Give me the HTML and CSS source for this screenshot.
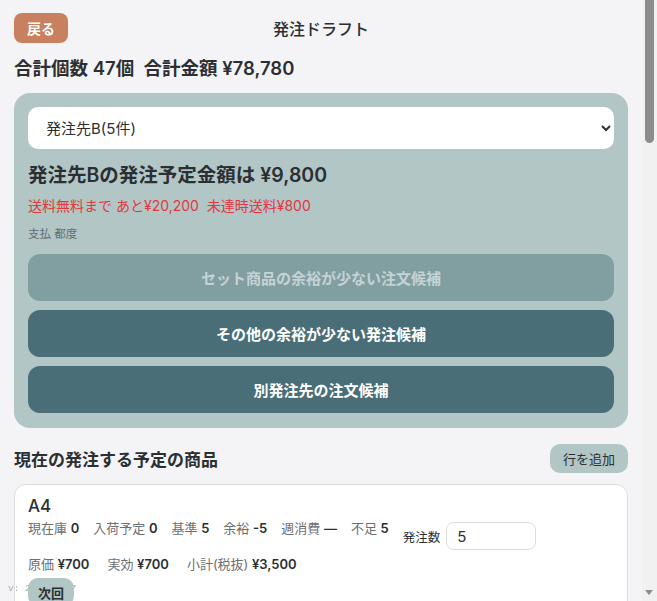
FILE: index.html
```html
<!DOCTYPE html>
<html lang="ja">
<head>
    <meta charset="UTF-8">
    <meta name="viewport" content="width=device-width, initial-scale=1.0">
    <title>発注ドラフト</title>
    <link rel="stylesheet" href="styles.css">
</head>
<body>

    <header class="topbar">
        <button class="back-btn">戻る</button>
        <h1 class="title">発注ドラフト</h1>
        <span></span>
    </header>

    <div class="totals">合計個数 47個&nbsp;&nbsp;合計金額 ¥78,780</div>

    <section class="supplier-panel">
        <select class="supplier-select">
            <option>発注先B(5件)</option>
            <option>発注先A(12件)</option>
            <option>発注先C(8件)</option>
        </select>

        <h2 class="supplier-total">発注先Bの発注予定金額は ¥9,800</h2>
        <p class="shipping">送料無料まで あと¥20,200&nbsp;&nbsp;未達時送料¥800</p>
        <p class="payment">支払 都度</p>

        <button class="candidate-btn" disabled>セット商品の余裕が少ない注文候補</button>
        <button class="candidate-btn">その他の余裕が少ない発注候補</button>
        <button class="candidate-btn">別発注先の注文候補</button>
    </section>

    <div class="list-head">
        <h2>現在の発注する予定の商品</h2>
        <button class="add-btn">行を追加</button>
    </div>

    <div class="item-list">
        <div class="item-card">
            <div class="item-name">A4</div>
            <div class="item-row">
                <div class="stats">
                    <span>現在庫 <b>0</b></span>
                    <span>入荷予定 <b>0</b></span>
                    <span>基準 <b>5</b></span>
                    <span>余裕 <b>-5</b></span>
                    <span>週消費 <b>—</b></span>
                    <span>不足 <b>5</b></span>
                </div>
                <label class="qty">発注数 <input type="text" value="5"></label>
            </div>
            <div class="prices">
                <span>原価 <b>¥700</b></span>
                <span>実効 <b>¥700</b></span>
                <span>小計(税抜) <b>¥3,500</b></span>
            </div>
            <button class="next-btn">次回</button>
        </div>

        <div class="item-card">
            <div class="item-name">B5</div>
            <div class="item-row">
                <div class="stats">
                    <span>現在庫 <b>2</b></span>
                    <span>入荷予定 <b>0</b></span>
                    <span>基準 <b>6</b></span>
                    <span>余裕 <b>-4</b></span>
                    <span>週消費 <b>—</b></span>
                    <span>不足 <b>4</b></span>
                </div>
                <label class="qty">発注数 <input type="text" value="4"></label>
            </div>
            <div class="prices">
                <span>原価 <b>¥650</b></span>
                <span>実効 <b>¥650</b></span>
                <span>小計(税抜) <b>¥2,600</b></span>
            </div>
            <button class="next-btn">次回</button>
        </div>

        <div class="item-card">
            <div class="item-name">A3</div>
            <div class="item-row">
                <div class="stats">
                    <span>現在庫 <b>1</b></span>
                    <span>入荷予定 <b>0</b></span>
                    <span>基準 <b>3</b></span>
                    <span>余裕 <b>-2</b></span>
                    <span>週消費 <b>—</b></span>
                    <span>不足 <b>2</b></span>
                </div>
                <label class="qty">発注数 <input type="text" value="2"></label>
            </div>
            <div class="prices">
                <span>原価 <b>¥850</b></span>
                <span>実効 <b>¥850</b></span>
                <span>小計(税抜) <b>¥1,700</b></span>
            </div>
            <button class="next-btn">次回</button>
        </div>

        <div class="item-card">
            <div class="item-name">封筒 長3</div>
            <div class="item-row">
                <div class="stats">
                    <span>現在庫 <b>0</b></span>
                    <span>入荷予定 <b>0</b></span>
                    <span>基準 <b>2</b></span>
                    <span>余裕 <b>-2</b></span>
                    <span>週消費 <b>—</b></span>
                    <span>不足 <b>2</b></span>
                </div>
                <label class="qty">発注数 <input type="text" value="2"></label>
            </div>
            <div class="prices">
                <span>原価 <b>¥500</b></span>
                <span>実効 <b>¥500</b></span>
                <span>小計(税抜) <b>¥1,000</b></span>
            </div>
            <button class="next-btn">次回</button>
        </div>

        <div class="item-card">
            <div class="item-name">付箋</div>
            <div class="item-row">
                <div class="stats">
                    <span>現在庫 <b>3</b></span>
                    <span>入荷予定 <b>0</b></span>
                    <span>基準 <b>4</b></span>
                    <span>余裕 <b>-1</b></span>
                    <span>週消費 <b>—</b></span>
                    <span>不足 <b>1</b></span>
                </div>
                <label class="qty">発注数 <input type="text" value="1"></label>
            </div>
            <div class="prices">
                <span>原価 <b>¥1,000</b></span>
                <span>実効 <b>¥1,000</b></span>
                <span>小計(税抜) <b>¥1,000</b></span>
            </div>
            <button class="next-btn">次回</button>
        </div>
    </div>

    <div class="version">v: 2a8d1e367</div>

    <!-- 縦スクロールバー -->
    <div class="scrollbar">
        <div class="scroll-thumb"></div>
        <div class="scroll-down"></div>
    </div>

</body>
</html>
```

FILE: styles.css
```css
body {
    background-color: #f4f4f6;
    margin: 0;
    padding: 13px 29px 40px 14px;
    color: #2b2f33;
    font-family: 'Inter', 'Noto Sans CJK JP', sans-serif;
}

button {
    font-family: inherit;
    border: none;
    cursor: pointer;
}

.topbar {
    display: grid;
    grid-template-columns: 1fr auto 1fr;
    align-items: center;
}

.back-btn {
    justify-self: start;
    height: 30px;
    padding: 0 13px;
    background-color: #c8805f;
    color: #ffffff;
    font-size: 14px;
    font-weight: 700;
    border-radius: 8px;
}

.title {
    margin: 0;
    font-size: 16px;
    font-weight: 500;
}

.totals {
    margin-top: 12px;
    font-size: 18.5px;
    font-weight: 600;
    line-height: 26px;
}

.supplier-panel {
    margin-top: 12px;
    background-color: #b1c6c5;
    border-radius: 16px;
    padding: 14px 14px 15px;
    display: flex;
    flex-direction: column;
}

.supplier-select {
    height: 42px;
    padding: 0 14px;
    background-color: #ffffff;
    border: none;
    border-radius: 10px;
    font-family: inherit;
    font-size: 15px;
    color: #2b2f33;
}

.supplier-total {
    margin: 12px 0 0;
    font-size: 19.5px;
    font-weight: 600;
    line-height: 28px;
}

.shipping {
    margin: 7px 0 0;
    color: #e0393e;
    font-size: 14px;
    line-height: 20px;
}

.payment {
    margin: 10px 0 0;
    color: #666b6e;
    font-size: 11.5px;
    line-height: 16px;
}

.candidate-btn {
    height: 47px;
    margin-top: 9px;
    background-color: #496e77;
    color: #ffffff;
    font-size: 15px;
    font-weight: 700;
    border-radius: 12px;
}

.supplier-panel .payment + .candidate-btn {
    margin-top: 12px;
}

.candidate-btn:disabled {
    background-color: #819fa1;
    color: #c4d3d4;
}

.list-head {
    display: flex;
    justify-content: space-between;
    align-items: center;
    margin-top: 16px;
}

.list-head h2 {
    margin: 0;
    font-size: 17px;
    font-weight: 600;
}

.add-btn {
    height: 29px;
    padding: 0 13px;
    background-color: #b1c6c5;
    color: #2b2f33;
    font-size: 13px;
    border-radius: 10px;
}

.item-list {
    margin-top: 11px;
    display: flex;
    flex-direction: column;
    gap: 12px;
}

.item-card {
    background-color: #ffffff;
    border: 1px solid #dcdcdc;
    border-radius: 12px;
    padding: 10px 13px 14px;
}

.item-name {
    font-size: 17px;
    font-weight: 500;
    line-height: 22px;
}

.item-row {
    display: flex;
    align-items: flex-start;
    gap: 14px;
    margin-top: 3px;
}

.stats,
.prices {
    display: flex;
    flex-wrap: wrap;
    column-gap: 14px;
    color: #6b6f72;
    font-size: 13px;
    line-height: 17px;
}

.stats b,
.prices b {
    color: #2b2f33;
    font-weight: 600;
}

.qty {
    display: flex;
    align-items: center;
    gap: 6px;
    margin-top: 2px;
    font-size: 12.5px;
    color: #2b2f33;
}

.qty input {
    width: 90px;
    height: 28px;
    box-sizing: border-box;
    padding: 0 10px;
    border: 1px solid #dcdcdc;
    border-radius: 8px;
    font-family: inherit;
    font-size: 15px;
    color: #2b2f33;
}

.prices {
    margin-top: 6px;
    column-gap: 18px;
}

.next-btn {
    position: relative;
    z-index: 2;
    margin-top: 5px;
    height: 28px;
    padding: 0 10px;
    background-color: #b1c6c5;
    color: #2b2f33;
    font-size: 13px;
    font-weight: 700;
    border-radius: 10px;
}

/* ビルド番号は左下に常に表示 */
.version {
    position: fixed;
    left: 8px;
    bottom: 7px;
    z-index: 1;
    color: #a9adb1;
    font-family: 'Liberation Mono', monospace;
    font-size: 9.5px;
}

.scrollbar {
    position: fixed;
    top: 0;
    right: 0;
    width: 15px;
    height: 100%;
    background-color: #f1f1f1;
}

.scroll-thumb {
    margin-left: 3px;
    width: 9px;
    height: 143px;
    background-color: #8c8c8c;
    border-radius: 0 0 5px 5px;
}

.scroll-down {
    position: absolute;
    bottom: 6px;
    left: 3px;
    border-left: 4.5px solid transparent;
    border-right: 4.5px solid transparent;
    border-top: 5px solid #8c8c8c;
}
```
